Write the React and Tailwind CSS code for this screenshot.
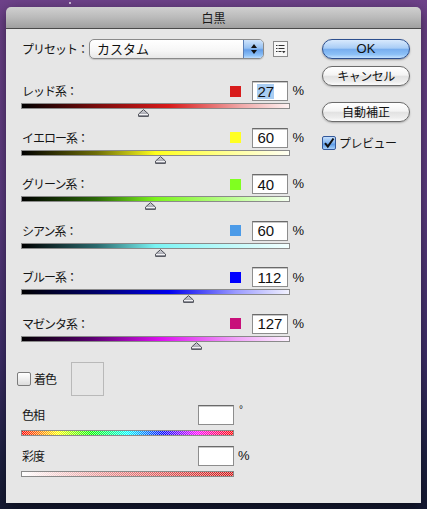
import React from 'react';

const JP = { fontFamily: '"Noto Sans CJK JP", "Noto Sans", sans-serif' };
const LIB = { fontFamily: '"Liberation Sans", Arial, sans-serif' };

const CHANNELS = [
  { label: 'レッド系：', swatch: '#d81c1c', value: 27, grad: 'linear-gradient(to right,#000 0%,#7a0c0c 28%,#d81a1a 55%,#f0a8a8 82%,#fdf2f2 100%)' },
  { label: 'イエロー系：', swatch: '#ffff22', value: 60, grad: 'linear-gradient(to right,#000 0%,#6e6e08 28%,#ffff1c 50%,#ffffa0 80%,#fffff4 100%)' },
  { label: 'グリーン系：', swatch: '#80ff20', value: 40, grad: 'linear-gradient(to right,#000 0%,#2c6a08 28%,#7cf31c 50%,#c4ffa0 82%,#f6fff2 100%)' },
  { label: 'シアン系：', swatch: '#4c9be8', value: 60, grad: 'linear-gradient(to right,#000 0%,#2a6a6e 28%,#7af4f4 50%,#c4fafa 80%,#f4ffff 100%)' },
  { label: 'ブルー系：', swatch: '#0000ff', value: 112, grad: 'linear-gradient(to right,#000 0%,#00006a 28%,#0000ee 55%,#9a9aff 80%,#f2f2ff 100%)' },
  { label: 'マゼンタ系：', swatch: '#c8107a', value: 127, grad: 'linear-gradient(to right,#000 0%,#5a0070 26%,#dd10f0 52%,#f0a0f8 80%,#fdf2ff 100%)' },
];

function Thumb() {
  return (
    <svg width="11" height="8" viewBox="0 0 11 8">
      <defs>
        <linearGradient id="tg" x1="0" y1="0" x2="0" y2="1">
          <stop offset="0" stopColor="#d8d8de" />
          <stop offset="1" stopColor="#8e909a" />
        </linearGradient>
      </defs>
      <path d="M5.5 0.6 L10.4 5 L10.4 7.4 L0.6 7.4 L0.6 5 Z" fill="url(#tg)" stroke="#4e5058" strokeWidth="1" />
      <line x1="1" y1="5.5" x2="10" y2="5.5" stroke="#f2f2f4" strokeWidth="1" />
    </svg>
  );
}

function NumBox({ children, className = '' }) {
  return (
    <div className={`flex h-[20px] w-[36px] items-center border border-[#8d8d8d] border-t-[#6a6a6a] bg-white pl-[4px] text-[15px] leading-none text-[#111] shadow-[inset_0_1px_0_#c8c8c8] ${className}`} style={LIB}>
      {children}
    </div>
  );
}

function Label({ children, className = '' }) {
  return (
    <span className={`whitespace-nowrap text-[12px] tracking-[-1px] text-[#151515] ${className}`} style={JP}>
      {children}
    </span>
  );
}

function ChannelRow({ ch }) {
  const frac = (ch.value + 200) / 500;
  return (
    <div className="h-[46.6px]">
      <div className="flex h-[20px] w-[283px] items-center">
        <Label className="ml-[1px] flex-1">{ch.label}</Label>
        <span className="h-[11px] w-[11px]" style={{ background: ch.swatch }} />
        <NumBox className="ml-[11px]">
          {ch.value === 27 ? <span className="bg-[#a9cdf2]">27</span> : ch.value}
        </NumBox>
        <span className="ml-[4px] text-[13px] text-[#111]" style={LIB}>%</span>
      </div>
      <div className="mt-[2px] h-[6px] w-[269px] border border-[#8a8a8a]" style={{ background: ch.grad }} />
      <div className="relative h-[8px] w-[269px]">
        <div className="absolute top-0" style={{ left: `${frac * 269 - 5.5}px` }}>
          <Thumb />
        </div>
      </div>
    </div>
  );
}

function AquaButton({ children, primary, className = '' }) {
  const base = primary
    ? 'border-[#2d4f8e] bg-[linear-gradient(180deg,#d8e9fd_0%,#a9cdf6_45%,#78aeef_52%,#8cc0f6_80%,#c4e2ff_100%)] shadow-[0_1px_2px_rgba(0,0,0,0.35)]'
    : 'border-[#6b6b6b] bg-[linear-gradient(180deg,#ffffff_0%,#f4f4f4_45%,#e2e2e2_52%,#ececec_80%,#fbfbfb_100%)] shadow-[0_1px_2px_rgba(0,0,0,0.25)]';
  return (
    <div className={`flex h-[20px] w-[88px] items-center justify-center rounded-full border text-[#111] ${base} ${className}`}>
      {children}
    </div>
  );
}

function CheckerBar({ gradientClass }) {
  return (
    <div className={`mt-[5px] h-[6px] w-[213px] border border-[#8a8a8a] ${gradientClass}`}>
      <div className="h-full w-full bg-[repeating-conic-gradient(#ffffff_0_25%,transparent_0_50%)] bg-[length:2px_2px] opacity-60" />
    </div>
  );
}

export default function App() {
  return (
    <div className="h-[509px] w-[427px] overflow-hidden bg-[linear-gradient(180deg,#6e428a_0%,#5d3c83_40%,#3f2f6c_70%,#1f2244_90%,#151a33_100%)] px-[6px] pt-[7px]">
      <div className="relative h-[2px] w-[2px] -mt-[5px] ml-[63px] rounded-full bg-white/80" />
      <div className="mt-[3px] flex h-[496px] w-[415px] flex-col overflow-hidden rounded-t-[5px] shadow-[0_4px_14px_rgba(0,0,0,0.5)]">
        {/* title bar */}
        <div className="flex h-[22px] shrink-0 items-center justify-center border-b border-[#4a4a4a] bg-[linear-gradient(180deg,#d0d0d0_0%,#bababa_50%,#a0a0a0_100%)]">
          <span className="text-[12px] text-[#1a1a1a]" style={JP}>白黒</span>
        </div>

        <div className="flex flex-1 items-start bg-[#e6e6e6]">
          {/* left column */}
          <div className="w-[298px] pl-[15px] pt-[10px]">
            <div className="flex h-[20px] items-center">
              <Label className="ml-[1px] w-[67px]">プリセット：</Label>
              <div className="flex h-[20px] w-[175px] overflow-hidden rounded-[5px] border border-[#8a8a8a] bg-[linear-gradient(180deg,#ffffff_0%,#f6f6f6_60%,#e8e8e8_100%)] shadow-[0_1px_1px_rgba(0,0,0,0.15)]">
                <span className="flex flex-1 items-center pl-[7px] text-[13px] text-[#111]" style={JP}>カスタム</span>
                <div className="flex w-[20px] flex-col items-center justify-center gap-[2px] border-l border-[#5b7fb6] bg-[linear-gradient(180deg,#d0e4fb_0%,#96c1f2_45%,#649ee9_55%,#8cc0f7_85%,#bcdcfd_100%)]">
                  <svg width="6" height="4" viewBox="0 0 6 4"><path d="M3 0 L6 4 L0 4 Z" fill="#111" /></svg>
                  <svg width="6" height="4" viewBox="0 0 6 4"><path d="M0 0 L6 0 L3 4 Z" fill="#111" /></svg>
                </div>
              </div>
              <div className="ml-[9px] flex h-[16px] w-[15px] items-center justify-center border border-[#8a8a8a] bg-[#f7f7f7]">
                <svg width="11" height="10" viewBox="0 0 11 10">
                  <g fill="#333">
                    <rect x="1" y="1" width="1.5" height="1" />
                    <rect x="3.5" y="1" width="6" height="1" />
                    <rect x="1" y="4" width="1.5" height="1" />
                    <rect x="3.5" y="4" width="6" height="1" />
                    <rect x="1" y="7" width="1.5" height="1" />
                    <rect x="3.5" y="7" width="3" height="1" />
                    <path d="M7 7 L10.5 7 L8.75 9.2 Z" />
                  </g>
                </svg>
              </div>
            </div>

            <div className="mt-[22px]">
              {CHANNELS.map((ch) => (
                <ChannelRow key={ch.label} ch={ch} />
              ))}
            </div>

            {/* colorize */}
            <div className="-ml-[4px] mt-[1.4px] flex h-[34px] items-center">
              <span className="h-[14px] w-[14px] rounded-[2px] border border-[#7c7c7c] bg-[linear-gradient(180deg,#ffffff_0%,#ededed_55%,#dcdcdc_100%)]" />
              <Label className="ml-[3px] w-[37px]">着色</Label>
              <span className="h-[34px] w-[33px] border border-[#b9b9b9] bg-[#e6e6e6]" />
            </div>

            {/* hue */}
            <div className="mt-[9px] flex h-[20px] items-center">
              <Label className="ml-[1px] w-[176px]">色相</Label>
              <NumBox />
              <span className="ml-[5px] self-start text-[10px] leading-none text-[#222]" style={LIB}>°</span>
            </div>
            <CheckerBar gradientClass="bg-[linear-gradient(to_right,#ff0000_0%,#ffff00_17%,#00ff00_33%,#00ffff_50%,#0000ff_67%,#ff00ff_83%,#ff0000_100%)]" />

            {/* saturation */}
            <div className="mt-[10px] flex h-[20px] items-center">
              <Label className="ml-[1px] w-[176px]">彩度</Label>
              <NumBox />
              <span className="ml-[4px] text-[13px] text-[#111]" style={LIB}>%</span>
            </div>
            <CheckerBar gradientClass="bg-[linear-gradient(to_right,#ffffff_0%,#e89090_40%,#d01010_100%)]" />
          </div>

          {/* right column */}
          <div className="ml-[18px] w-[88px] pt-[10px]">
            <AquaButton primary>
              <span className="text-[13px]" style={LIB}>OK</span>
            </AquaButton>
            <AquaButton className="mt-[7px]">
              <span className="text-[12px] tracking-[-0.5px]" style={JP}>キャンセル</span>
            </AquaButton>
            <AquaButton className="mt-[16px]">
              <span className="text-[12px]" style={JP}>自動補正</span>
            </AquaButton>
            <div className="mt-[14px] flex h-[14px] items-center">
              <span className="flex h-[14px] w-[14px] items-center justify-center rounded-[2px] border border-[#33589a] bg-[linear-gradient(180deg,#c6e0fc_0%,#7fb3f0_50%,#5c9be6_60%,#a6d0fb_100%)]">
                <svg width="12" height="12" viewBox="0 0 12 12">
                  <path d="M2 6.2 L4.8 9.5 L10.5 1.5" fill="none" stroke="#111" strokeWidth="2" />
                </svg>
              </span>
              <span className="ml-[3px] text-[12px] tracking-[-0.5px] text-[#151515]" style={JP}>プレビュー</span>
            </div>
          </div>
        </div>
      </div>
    </div>
  );
}
